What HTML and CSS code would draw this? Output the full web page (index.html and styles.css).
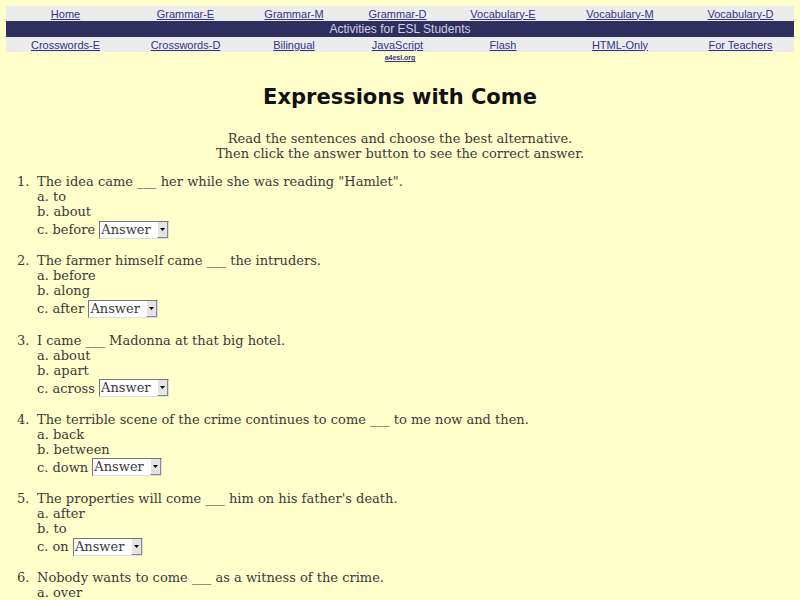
FILE: index.html
```html
<!DOCTYPE html>
<html lang="en">
<head>
<meta charset="utf-8">
<title>Expressions with Come</title>
<link rel="stylesheet" href="styles.css">
</head>
<body>
<div class="page">
  <nav class="nav">
    <div class="navrow">
      <a href="#">Home</a>
      <a href="#">Grammar-E</a>
      <a href="#">Grammar-M</a>
      <a href="#">Grammar-D</a>
      <a href="#">Vocabulary-E</a>
      <a href="#">Vocabulary-M</a>
      <a href="#">Vocabulary-D</a>
    </div>
    <div class="band">Activities for ESL Students</div>
    <div class="navrow">
      <a href="#">Crosswords-E</a>
      <a href="#">Crosswords-D</a>
      <a href="#">Bilingual</a>
      <a href="#">JavaScript</a>
      <a href="#">Flash</a>
      <a href="#">HTML-Only</a>
      <a href="#">For Teachers</a>
    </div>
    <div class="site"><a href="#">a4esl.org</a></div>
  </nav>

  <h1 class="title">Expressions with Come</h1>

  <p class="intro">Read the sentences and choose the best alternative.<br>Then click the answer button to see the correct answer.</p>

  <ol class="quiz">
    <li><div>The idea came ___ her while she was reading "Hamlet".<br>a. to<br>b. about<br><span class="last">c. before <span class="sel"><select><option>Answer</option></select><span class="arrow"><svg width="5" height="3" viewBox="0 0 5 3"><path d="M0 0H5L2.5 3Z" fill="#000"/></svg></span></span></span></div></li>
    <li><div>The farmer himself came ___ the intruders.<br>a. before<br>b. along<br><span class="last">c. after <span class="sel"><select><option>Answer</option></select><span class="arrow"><svg width="5" height="3" viewBox="0 0 5 3"><path d="M0 0H5L2.5 3Z" fill="#000"/></svg></span></span></span></div></li>
    <li><div>I came ___ Madonna at that big hotel.<br>a. about<br>b. apart<br><span class="last">c. across <span class="sel"><select><option>Answer</option></select><span class="arrow"><svg width="5" height="3" viewBox="0 0 5 3"><path d="M0 0H5L2.5 3Z" fill="#000"/></svg></span></span></span></div></li>
    <li><div>The terrible scene of the crime continues to come ___ to me now and then.<br>a. back<br>b. between<br><span class="last">c. down <span class="sel"><select><option>Answer</option></select><span class="arrow"><svg width="5" height="3" viewBox="0 0 5 3"><path d="M0 0H5L2.5 3Z" fill="#000"/></svg></span></span></span></div></li>
    <li><div>The properties will come ___ him on his father's death.<br>a. after<br>b. to<br><span class="last">c. on <span class="sel"><select><option>Answer</option></select><span class="arrow"><svg width="5" height="3" viewBox="0 0 5 3"><path d="M0 0H5L2.5 3Z" fill="#000"/></svg></span></span></span></div></li>
    <li><div>Nobody wants to come ___ as a witness of the crime.<br>a. over<br>b. forward<br><span class="last">c. up <span class="sel"><select><option>Answer</option></select><span class="arrow"><svg width="5" height="3" viewBox="0 0 5 3"><path d="M0 0H5L2.5 3Z" fill="#000"/></svg></span></span></span></div></li>
  </ol>
</div>
</body>
</html>
```

FILE: styles.css
```css
html, body {
  margin: 0;
  padding: 0;
  background: #ffffcc;
}
.page {
  padding: 6px 6px 0 6px;
}
.nav {
  font-family: "Liberation Sans", Arial, sans-serif;
  font-size: 11px;
}
.navrow {
  display: grid;
  grid-template-columns: 119px 121px 96px 111px 100px 134px 107px;
  background: #ececec;
  height: 15px;
  align-items: center;
  line-height: 14px;
}
.navrow a {
  text-align: center;
  color: #333388;
  text-decoration: underline;
}
.band {
  background: #2f2f5f;
  color: #d0d0e0;
  font-size: 12px;
  text-align: center;
  height: 16px;
  line-height: 16px;
}
.site {
  text-align: center;
  font-size: 7px;
  font-weight: bold;
  line-height: 10px;
  margin-top: 1px;
}
.site a {
  color: #333388;
}
.title {
  font-family: "DejaVu Sans", sans-serif;
  font-weight: bold;
  font-size: 21px;
  color: #111;
  text-align: center;
  margin: 19px 0 0 0;
  line-height: 30px;
}
.intro {
  font-family: "DejaVu Serif", serif;
  font-size: 13px;
  color: #3a3a3a;
  text-align: center;
  line-height: 15px;
  margin: 19px 0 0 0;
}
.quiz {
  font-family: "DejaVu Serif", serif;
  font-size: 13px;
  color: #3a3a3a;
  line-height: 15px;
  margin: 13px 0 0 0;
  padding-left: 11px;
  list-style: none;
  counter-reset: q;
}
.quiz li {
  counter-increment: q;
  display: grid;
  grid-template-columns: 20px 1fr;
  margin-bottom: 14.8px;
}
.quiz li::before {
  content: counter(q) ".";
}
.last {
  display: inline-block;
  margin-top: 3px;
}
.sel {
  display: inline-flex;
  align-items: stretch;
  vertical-align: middle;
  height: 16px;
  background: #fff;
  border-top: 1px solid #777;
  border-left: 1px solid #777;
  border-bottom: 1px solid #ddd;
  border-right: 1px solid #ddd;
  margin-top: -2px;
}
.sel select {
  appearance: none;
  -webkit-appearance: none;
  border: none;
  background: #fff;
  font-family: "DejaVu Serif", serif;
  font-size: 13px;
  color: #3a3a3a;
  padding: 0 1px;
  margin: 0;
  height: 16px;
  line-height: 16px;
  width: 57px;
  outline: none;
}
.arrow {
  width: 9px;
  background: #e4e4e4;
  border-left: 1px solid #fff;
  border-right: 1px solid #888;
  border-bottom: 1px solid #888;
  display: flex;
  align-items: center;
  justify-content: center;
}
```
